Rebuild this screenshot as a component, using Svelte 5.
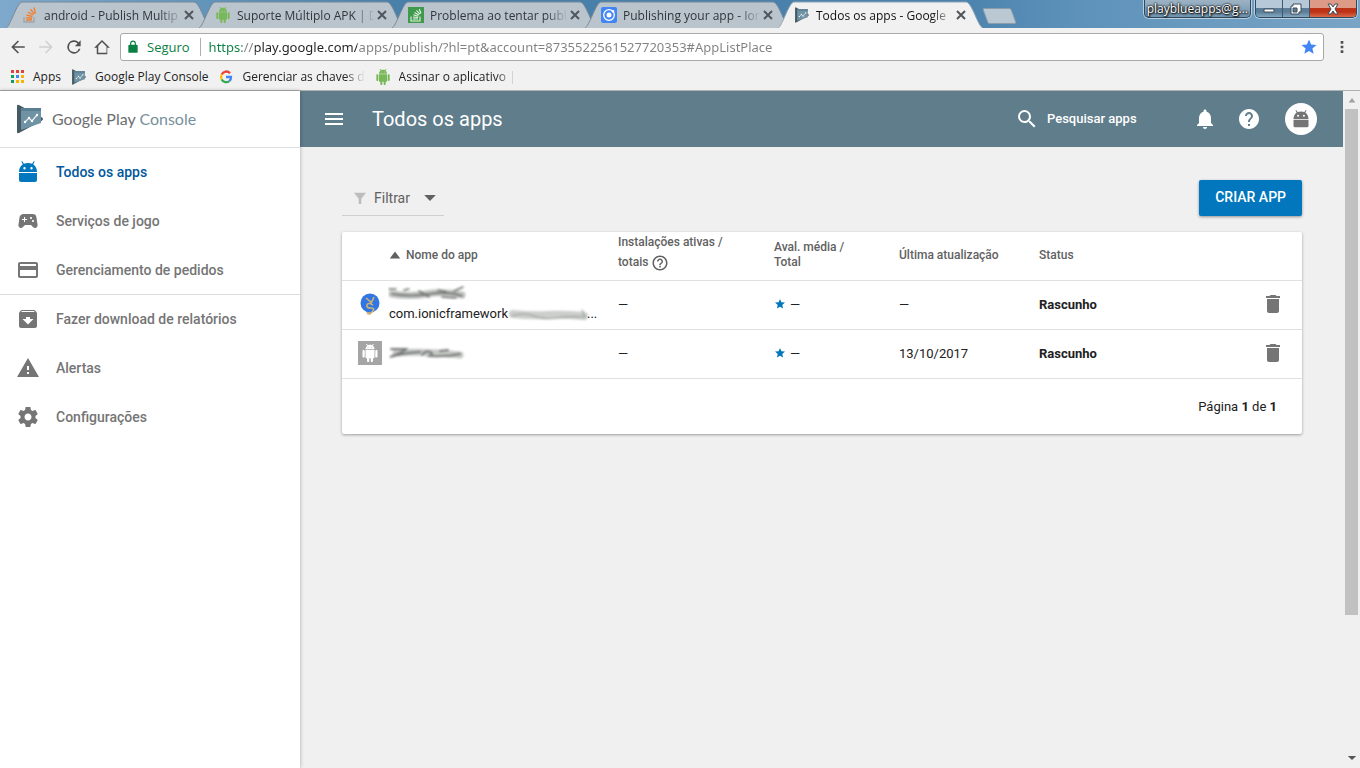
<script>
    const tabs = [
        { title: 'android - Publish Multip', icon: 'stack' },
        { title: 'Suporte Múltiplo APK | D', icon: 'robot' },
        { title: 'Problema ao tentar publ', icon: 'stackpt' },
        { title: 'Publishing your app - Ior', icon: 'ionic' },
        { title: 'Todos os apps - Google', icon: 'play', active: true },
    ];

    const bookmarks = [
        { title: 'Apps', icon: 'grid' },
        { title: 'Google Play Console', icon: 'play' },
        { title: 'Gerenciar as chaves d', icon: 'google', fade: true },
        { title: 'Assinar o aplicativo |', icon: 'robot', fade: true },
    ];

    const menu = [
        { title: 'Todos os apps', icon: 'bot', active: true },
        { title: 'Serviços de jogo', icon: 'gamepad' },
        { title: 'Gerenciamento de pedidos', icon: 'card', last: true },
        { title: 'Fazer download de relatórios', icon: 'archive' },
        { title: 'Alertas', icon: 'warning' },
        { title: 'Configurações', icon: 'gear' },
    ];

    const apps = [
        { icon: 'pin', pkg: 'com.ionicframework', updated: '—', status: 'Rascunho' },
        { icon: 'tile', pkg: '', updated: '13/10/2017', status: 'Rascunho' },
    ];

    // 24x24 single colour icons
    const paths = {
        back: 'M21 11H7l6.3-6.3L11.8 3.300 3 12l8.800 8.700 1.500-1.400L7 13h14z',
        forward: 'M3 11h14l-6.300-6.300 1.500-1.400L21 12l-8.800 8.700-1.500-1.400L17 13H3z',
        reload: 'M17.650 6.350A8 8 0 1 0 19.730 14h-2.080A6 6 0 1 1 12 6c1.660 0 3.140.690 4.220 1.780L13 11h7V4z',
        home: 'M12 2.500 1.500 13H5v8.500h14V13h3.500zM12 5.300l6 6V19.500H7v-8.700z',
        lock: 'M18 8h-1V6A5 5 0 0 0 7 6v2H6a2 2 0 0 0-2 2v10a2 2 0 0 0 2 2h12a2 2 0 0 0 2-2V10a2 2 0 0 0-2-2zM15 8H9V6a3 3 0 0 1 6 0z',
        star: 'M12 17.270 18.180 21l-1.640-7.030L22 9.240l-7.190-.610L12 2 9.190 8.630 2 9.240l5.460 4.730L5.820 21z',
        robot: 'M6 18c0 .55.45 1 1 1h1v3.500c0 .83.67 1.500 1.500 1.500s1.500-.67 1.500-1.500V19h2v3.500c0 .83.67 1.500 1.500 1.500s1.500-.67 1.500-1.500V19h1c.55 0 1-.45 1-1V8H6v10zM3.500 8C2.670 8 2 8.670 2 9.500v7c0 .83.67 1.500 1.500 1.500S5 17.330 5 16.500v-7C5 8.670 4.330 8 3.500 8zm17 0c-.83 0-1.500.67-1.500 1.500v7c0 .83.67 1.500 1.500 1.500s1.500-.67 1.500-1.500v-7c0-.83-.67-1.500-1.500-1.500zm-4.970-5.840l1.300-1.300c.2-.2.2-.51 0-.71-.2-.2-.51-.2-.71 0l-1.480 1.480C13.850 1.230 12.950 1 12 1c-.96 0-1.860.23-2.660.63L7.850.15c-.2-.2-.51-.2-.71 0-.2.2-.2.51 0 .71l1.310 1.310C6.970 3.260 6 5.010 6 7h12c0-1.990-.97-3.750-2.470-4.840zM10 5H9V4h1v1zm5 0h-1V4h1v1z',
        bot: 'M3 13h18v7a2 2 0 0 1-2 2H5a2 2 0 0 1-2-2zM3 12c0-3.400 1.400-6.200 3.800-7.800L5.300 1.800l1-.6 1.600 2.500C9.100 3.200 10.500 3 12 3s2.900.2 4.100.7l1.600-2.500 1 .6-1.500 2.400C19.600 5.800 21 8.600 21 12zM8.500 7a1.200 1.200 0 1 0 0 2.400 1.200 1.200 0 0 0 0-2.400zm7 0a1.200 1.200 0 1 0 0 2.400 1.200 1.200 0 0 0 0-2.400z',
        gamepad: 'M21.580 16.090l-1.090-7.660A3.996 3.996 0 0 0 16.530 5H7.470C5.480 5 3.790 6.460 3.510 8.430l-1.090 7.660C2.200 17.630 3.390 19 4.940 19c.68 0 1.320-.27 1.800-.75L9 16h6l2.250 2.250c.48.48 1.130.75 1.800.75 1.560 0 2.750-1.370 2.530-2.910zM11 11H9v2H8v-2H6v-1h2V8h1v2h2v1zm4-1c-.55 0-1-.45-1-1s.45-1 1-1 1 .45 1 1-.45 1-1 1zm2 3c-.55 0-1-.45-1-1s.45-1 1-1 1 .45 1 1-.45 1-1 1z',
        card: 'M20 4H4c-1.110 0-1.990.89-1.990 2L2 18c0 1.110.89 2 2 2h16c1.110 0 2-.89 2-2V6c0-1.110-.89-2-2-2zm0 14H4v-6h16v6zm0-10H4V6h16v2z',
        archive: 'M20.540 5.230l-1.390-1.680C18.880 3.210 18.470 3 18 3H6c-.47 0-.88.21-1.160.55L3.460 5.230C3.170 5.570 3 6.020 3 6.500V19c0 1.100.9 2 2 2h14c1.100 0 2-.9 2-2V6.500c0-.48-.17-.93-.46-1.270zM12 17.500L6.500 12H10v-2h4v2h3.500L12 17.500zM5.120 5l.81-1h12l.94 1H5.120z',
        warning: 'M1 21h22L12 2 1 21zm12-3h-2v-2h2v2zm0-4h-2v-4h2v4z',
        gear: 'M19.430 12.980c.04-.32.07-.64.07-.98s-.03-.66-.07-.98l2.110-1.650c.19-.15.24-.42.12-.64l-2-3.460c-.12-.22-.39-.3-.61-.22l-2.490 1c-.52-.4-1.080-.73-1.690-.98l-.38-2.650C14.460 2.180 14.250 2 14 2h-4c-.25 0-.46.18-.49.42l-.38 2.650c-.61.25-1.170.59-1.690.98l-2.490-1c-.23-.09-.49 0-.61.22l-2 3.460c-.13.22-.07.49.12.64l2.110 1.650c-.04.32-.07.65-.07.98s.03.66.07.98l-2.110 1.650c-.19.15-.24.42-.12.64l2 3.460c.12.22.39.3.61.22l2.490-1c.52.4 1.080.73 1.690.98l.38 2.650c.03.24.24.42.49.42h4c.25 0 .46-.18.49-.42l.38-2.650c.61-.25 1.170-.59 1.690-.98l2.490 1c.23.09.49 0 .61-.22l2-3.460c.12-.22.07-.49-.12-.64l-2.110-1.650zM12 15.500c-1.930 0-3.500-1.570-3.500-3.500s1.570-3.500 3.500-3.500 3.500 1.570 3.500 3.500-1.570 3.500-3.500 3.500z',
        menu: 'M3 18h18v-2H3v2zm0-5h18v-2H3v2zm0-7v2h18V6H3z',
        search: 'M15.500 14h-.79l-.28-.27A6.471 6.471 0 0 0 16 9.500 6.500 6.500 0 1 0 9.500 16c1.610 0 3.090-.59 4.230-1.570l.27.28v.79l5 4.990L20.490 19l-4.990-5zm-6 0C7.010 14 5 11.990 5 9.500S7.010 5 9.500 5 14 7.010 14 9.500 11.990 14 9.500 14z',
        bell: 'M12 22c1.100 0 2-.9 2-2h-4c0 1.100.89 2 2 2zm6-6v-5c0-3.070-1.640-5.640-4.500-6.320V4c0-.83-.67-1.500-1.500-1.500s-1.500.67-1.500 1.500v.68C7.630 5.360 6 7.920 6 11v5l-2 2v1h16v-1l-2-2z',
        help: 'M12 2C6.480 2 2 6.480 2 12s4.480 10 10 10 10-4.480 10-10S17.520 2 12 2zm1 17h-2v-2h2v2zm2.070-7.750l-.9.920C13.450 12.900 13 13.500 13 15h-2v-.5c0-1.100.45-2.100 1.170-2.830l1.240-1.260c.37-.36.59-.86.59-1.410 0-1.100-.9-2-2-2s-2 .9-2 2H8c0-2.210 1.790-4 4-4s4 1.790 4 4c0 .88-.36 1.680-.93 2.250z',
        helpline: 'M11 18h2v-2h-2v2zm1-16C6.480 2 2 6.480 2 12s4.480 10 10 10 10-4.480 10-10S17.520 2 12 2zm0 18c-4.410 0-8-3.590-8-8s3.590-8 8-8 8 3.590 8 8-3.590 8-8 8zm0-14c-2.210 0-4 1.790-4 4h2c0-1.100.9-2 2-2s2 .9 2 2c0 2-3 1.750-3 5h2c0-2.250 3-2.500 3-5 0-2.210-1.790-4-4-4z',
        filter: 'M3 4h18l-7 9v8h-4v-8z',
        trash: 'M6 19c0 1.100.9 2 2 2h8c1.100 0 2-.9 2-2V7H6v12zM19 4h-3.500l-1-1h-5l-1 1H5v2h14V4z',
        up: 'M4 18 12 7l8 11z',
        sort: 'M3 18 12 6l9 12z',
        down: 'M2 7h20L12 17z',
        dots: 'M10 3h4v4h-4zM10 10h4v4h-4zM10 17h4v4h-4z',
    };
</script>

{#snippet icon(name, size)}
    <svg class="icon" width={size} height={size} viewBox="0 0 24 24" aria-hidden="true">
        <path fill-rule="evenodd" d={paths[name]} />
    </svg>
{/snippet}

{#snippet playLogo(size)}
    <svg class="icon" width={size} height={size} viewBox="0 0 28 30" aria-hidden="true">
        <path fill="#455a64" d="M1 2Q1 0 3 1L26 13.500Q28 15 26 16.500L3 29Q1 30 1 28Z" />
        <path fill="#6f93a5" d="M5 4H25V19L5 26Z" />
        <path fill="#5b7f92" d="M5 4H25V7H5Z" />
        <path fill="none" stroke="#eceff1" stroke-width="1.200" d="M9 18l4-4 3 3 5-6" />
        <g fill="#fff">
            <circle cx="9" cy="18" r="1.200" /><circle cx="13" cy="14" r="1.200" />
            <circle cx="16" cy="17" r="1.200" /><circle cx="21" cy="11" r="1.200" />
        </g>
    </svg>
{/snippet}

{#snippet favicon(name)}
    {#if name === 'play'}
        {@render playLogo(16)}
    {:else if name === 'robot'}
        <span class="green">{@render icon('robot', 16)}</span>
    {:else}
        <svg class="icon" width="16" height="16" viewBox="0 0 16 16" aria-hidden="true">
            {#if name === 'stack'}
                <path fill="none" stroke="#a1a5a9" stroke-width="1.300" d="M2 10v5h10v-5" />
                <path fill="none" stroke="#ef8236" stroke-width="1.400" d="M4 13h6M4 10.700l6 .6M4.500 8l6 1.500M6 5l5.300 3M8.500 2.300l3.800 4.800M12 .5l1.300 6" />
            {:else if name === 'stackpt'}
                <rect width="16" height="16" fill="#3f9b4b" />
                <path fill="none" stroke="#e5f3e6" stroke-width="1.100" d="M3 9.500V14h9V9.500M5 12h5M5 10l5 .5M5.300 7.800l5 1.500M6.500 5.500l4.500 2.600M8.500 3.300l3.500 3.800M11.300 2l1.700 4.500" />
            {:else if name === 'ionic'}
                <rect width="16" height="16" rx="2" fill="#4286f4" />
                <circle cx="8" cy="8" r="5.300" fill="none" stroke="#fff" stroke-width="1.300" />
                <circle cx="8" cy="8" r="2.500" fill="#fff" />
                <circle cx="12" cy="4.200" r="1.300" fill="#fff" />
            {:else if name === 'grid'}
                <path fill="#db4437" d="M2 1h3v3H2zM7 1h3v3H7zM12 1h3v3h-3z" />
                <path fill="#0f9d58" d="M2 6h3v3H2zM2 11h3v3H2z" />
                <path fill="#4285f4" d="M7 6h3v3H7z" />
                <path fill="#f4b400" d="M12 6h3v3h-3zM7 11h3v3H7zM12 11h3v3h-3z" />
            {:else if name === 'google'}
                <g fill="none" stroke-width="2.300">
                    <path stroke="#ea4335" d="M12 4.200A5 5 0 0 0 3.700 5.500" />
                    <path stroke="#fbbc05" d="M3.700 5.500a5 5 0 0 0 0 5" />
                    <path stroke="#34a853" d="M3.700 10.500a5 5 0 0 0 7.700 1.500" />
                    <path stroke="#4285f4" d="M11.400 12A5 5 0 0 0 13 8H8" />
                </g>
            {/if}
        </svg>
    {/if}
{/snippet}

{#snippet smudge(kind)}
    <svg class="smudge" width="82" height="16" viewBox="0 0 82 16" aria-hidden="true">
        <g class="soft" fill="none" stroke-linecap="round">
            {#if kind === 'name'}
                <path stroke="#c0c3c0" stroke-width="7" d="M4 10q18 3 34 0t36 1" />
                <path stroke="#6d706e" stroke-width="1.500" d="M1 5h7M16 6l5-1M4 10q20 3 38 0t32 2M31 7l10 6M50 6l8 2M66 7l9-4M54 13l14 1" />
            {:else if kind === 'pkg'}
                <path stroke="#cbcecb" stroke-width="8" d="M5 8q18 2 34 1t37 1" />
                <path stroke="#9a9e9b" stroke-width="1.200" d="M4 10q12-4 22 0t22 2 28-1M74 4l3 7" />
            {:else}
                <path stroke="#c6c8c6" stroke-width="7" d="M8 8q30-2 64 2" />
                <path stroke="#777a78" stroke-width="2" d="M3 4h15q-4 4-16 8 12-4 30-5M34 10q4-5 8-3t0 4q16 1 30-2M52 6l8-1" />
            {/if}
        </g>
    </svg>
{/snippet}

<div class="window">
    <header class="browser">
        <div class="tabstrip">
            {#each tabs as tab}
                <div class="tab" class:active={tab.active}>
                    <svg class="tab-shape" viewBox="0 0 205 27" preserveAspectRatio="none" aria-hidden="true">
                        <path d="M0 27C4 26 11 1 16 1H188C194 1 200 26 205 27" />
                    </svg>
                    {@render favicon(tab.icon)}
                    <span class="tab-title">{tab.title}</span>
                    <button class="tab-close" aria-label="Fechar guia">
                        <svg width="10" height="10" viewBox="0 0 10 10"><path d="M1 1l8 8M9 1l-8 8" /></svg>
                    </button>
                </div>
            {/each}
            <button class="new-tab" aria-label="Nova guia"></button>
            <div class="caption">
                <button class="profile">playblueapps@g...</button>
                <div class="controls">
                    <button aria-label="Minimizar">
                        <svg width="12" height="12" viewBox="0 0 12 12"><path class="glyph" d="M1 6h10v3H1z" /></svg>
                    </button>
                    <button aria-label="Restaurar">
                        <svg width="12" height="12" viewBox="0 0 12 12">
                            <path class="glyph" fill-rule="evenodd" d="M3 1h8v8h-2v2H1V3h2zM3 5v4h4V5z" />
                        </svg>
                    </button>
                    <button class="close" aria-label="Fechar">
                        <svg width="14" height="12" viewBox="0 0 14 12">
                            <path class="glyph" d="M2 1h3l2 3 2-3h3L9 6l3 5H9L7 8l-2 3H2l3-5z" />
                        </svg>
                    </button>
                </div>
            </div>
        </div>

        <div class="toolbar">
            <button class="tool" aria-label="Voltar">{@render icon('back', 18)}</button>
            <button class="tool disabled" aria-label="Avançar">{@render icon('forward', 18)}</button>
            <button class="tool" aria-label="Recarregar">{@render icon('reload', 20)}</button>
            <button class="tool" aria-label="Página inicial">{@render icon('home', 18)}</button>
            <div class="omnibox">
                {@render icon('lock', 14)}
                <label for="url">Seguro</label>
                <input id="url" type="text" value="https://play.google.com/apps/publish/?hl=pt&account=8735522561527720353#AppListPlace">
                <button class="favorite" aria-label="Favorito">{@render icon('star', 18)}</button>
            </div>
            <button class="tool dots" aria-label="Menu">{@render icon('dots', 16)}</button>
        </div>

        <nav class="bookmarks">
            {#each bookmarks as mark}
                <a href="#bookmark">
                    {@render favicon(mark.icon)}
                    <span class:fade={mark.fade}>{mark.title}</span>
                </a>
            {/each}
        </nav>
    </header>

    <div class="page">
        <aside>
            <a class="brand" href="#home">
                {@render playLogo(30)}
                <span>Google Play <em>Console</em></span>
            </a>
            <nav>
                {#each menu as item}
                    <a href="#menu" class:active={item.active} class:last={item.last}>
                        {@render icon(item.icon, 24)}
                        {item.title}
                    </a>
                {/each}
            </nav>
        </aside>

        <main>
            <div class="topbar">
                <button aria-label="Menu principal">{@render icon('menu', 24)}</button>
                <h1>Todos os apps</h1>
                <label class="search">
                    {@render icon('search', 24)}
                    <input type="text" placeholder="Pesquisar apps">
                </label>
                <button class="notifications" aria-label="Notificações">{@render icon('bell', 24)}</button>
                <button class="help" aria-label="Ajuda">{@render icon('help', 24)}</button>
                <button class="avatar" aria-label="Conta">{@render icon('bot', 20)}</button>
            </div>

            <div class="content">
                <div class="actions">
                    <button class="filter">
                        {@render icon('filter', 16)}
                        <span>Filtrar</span>
                        {@render icon('down', 14)}
                    </button>
                    <button class="create">CRIAR APP</button>
                </div>

                <section class="card">
                    <table>
                        <colgroup>
                            <col>
                            <col class="installs">
                            <col class="rating">
                            <col class="updated">
                            <col class="status">
                            <col class="remove">
                        </colgroup>
                        <thead>
                            <tr>
                                <th class="sorted">{@render icon('sort', 14)}Nome do app</th>
                                <th class="tall">Instalações ativas /<br>totais {@render icon('helpline', 18)}</th>
                                <th>Aval. média /<br>Total</th>
                                <th>Última atualização</th>
                                <th>Status</th>
                                <th></th>
                            </tr>
                        </thead>
                        <tbody>
                            {#each apps as app}
                                <tr>
                                    <td>
                                        <div class="app">
                                            {#if app.icon === 'pin'}
                                                <svg width="24" height="24" viewBox="0 0 24 24" aria-hidden="true">
                                                    <path fill="#e8b64c" d="M8 18h8l-4 5z" />
                                                    <circle cx="12" cy="11" r="9.500" fill="#3276e3" />
                                                    <path fill="none" stroke="#cdb277" stroke-width="1.600" d="M8 6l6 5M16 5q-1 4-4 6M15 13q-5-3-6 0t4 3 1 4-5 0" />
                                                </svg>
                                            {:else}
                                                <span class="tile">{@render icon('robot', 18)}</span>
                                            {/if}
                                            <div class="app-name">
                                                {@render smudge(app.pkg ? 'name' : 'short')}
                                                {#if app.pkg}
                                                    <span class="package">{app.pkg}{@render smudge('pkg')}...</span>
                                                {/if}
                                            </div>
                                        </div>
                                    </td>
                                    <td>—</td>
                                    <td><span class="score">{@render icon('star', 12)}—</span></td>
                                    <td>{app.updated}</td>
                                    <td><b>{app.status}</b></td>
                                    <td><button class="trash" aria-label="Excluir">{@render icon('trash', 24)}</button></td>
                                </tr>
                            {/each}
                        </tbody>
                    </table>
                    <p class="pager">Página <b>1</b> de <b>1</b></p>
                </section>
            </div>
        </main>

        <div class="scrollbar">
            {@render icon('up', 10)}
            <div class="track">
                <div class="thumb"></div>
            </div>
            {@render icon('down', 10)}
        </div>
    </div>
</div>

<style>
:global(body) {
    margin: 0;
}

.window {
    display: flex;
    flex-direction: column;
    height: 100vh;
    overflow: hidden;
    font-family: Roboto, sans-serif;
    font-size: 13px;
    color: #212121;
}

button, input {
    font: inherit;
    color: inherit;
    background: none;
    border: 0;
    padding: 0;
}

input {
    outline: 0;
}

a {
    color: inherit;
    text-decoration: none;
}

.icon {
    display: block;
    flex: none;
    fill: currentColor;
}

/* Browser */
.browser {
    font-family: "Open Sans", "Noto Sans", sans-serif;
    font-size: 12px;
    background: #f1f1f1;
    border-bottom: 1px solid #b0b0b0;
}

.tabstrip {
    display: flex;
    height: 28px;
    padding-left: 6px;
    background: linear-gradient(90deg, #7fa9cc 0%, #487fa8 30%, #4a82ad 70%, #5f93bb 80%, #79a4c5 100%);
}

.tab {
    position: relative;
    display: flex;
    align-items: center;
    flex: 0 1 205px;
    min-width: 0;
    box-sizing: border-box;
    margin-right: -12px;
    padding: 2px 17px 0 16px;
    color: #30363b;
}

.tab.active {
    z-index: 1;
    color: #111;
}

.tab .icon, .tab-title, .tab-close, .tab .green {
    position: relative;
}

.tab-shape {
    position: absolute;
    inset: 1px 0 0;
    width: 100%;
    height: 27px;
    fill: #bac4cd;
    stroke: #74889a;
}

.active .tab-shape {
    fill: #f1f1f1;
    stroke: #8fa3b3;
}

.tab-title {
    flex: 1;
    min-width: 0;
    margin-left: 6px;
    white-space: nowrap;
    mask-image: linear-gradient(90deg, #000 116px, transparent 138px);
}

.tab-close {
    display: flex;
    margin-left: 2px;
}

.tab-close path {
    stroke: #50565b;
    stroke-width: 2;
}

.green {
    color: #78b957;
}

.new-tab {
    flex: none;
    width: 29px;
    height: 16px;
    margin: 8px 0 0 14px;
    background: #bac8d3;
    border: 1px solid #8a9dac;
    border-radius: 2px;
    transform: skewX(20deg);
}

.caption {
    display: flex;
    flex: none;
    align-items: flex-start;
    margin-left: auto;
    padding-right: 3px;
}

.profile {
    height: 18px;
    margin-right: 4px;
    padding: 0 2px;
    line-height: 17px;
    color: #fff;
    text-shadow: 0 0 2px #000, 0 0 2px #000, 1px 1px 2px #000;
    background: linear-gradient(#9db3c4, #6f93ae);
    border: 1px solid #31495c;
    border-top: 0;
    border-radius: 0 0 5px 5px;
    box-shadow: 0 0 0 1px #b7cfe0;
}

.controls {
    display: flex;
    border: 1px solid #31495c;
    border-top: 0;
    border-radius: 0 0 5px 5px;
    box-shadow: 0 0 0 1px #b7cfe0;
    overflow: hidden;
}

.controls button {
    display: flex;
    align-items: center;
    justify-content: center;
    width: 27px;
    height: 17px;
    background: linear-gradient(#b5c9d8 0 50%, #5c7d97 50% 70%, #85a9c3);
    border-right: 1px solid #3f596c;
}

.controls .close {
    width: 46px;
    border: 0;
    background: linear-gradient(#dd9a87 0 50%, #bd3217 50% 70%, #d96a49);
}

.glyph {
    fill: #fff;
    stroke: #3d4c58;
}

.toolbar {
    display: flex;
    align-items: center;
    height: 38px;
    padding: 0 8px 0 4px;
    color: #505050;
}

.tool {
    display: flex;
    justify-content: center;
    width: 28px;
}

.disabled {
    color: #d0d0d0;
}

.omnibox {
    display: flex;
    flex: 1;
    align-items: center;
    height: 28px;
    box-sizing: border-box;
    margin: 0 8px 0 4px;
    padding: 0 5px;
    color: #0b8043;
    background: #fff;
    border: 1px solid #a9a9a9;
    border-radius: 3px;
    font-size: 13px;
}

.omnibox label {
    margin: 0 8px 0 7px;
    padding-right: 10px;
    line-height: 18px;
    border-right: 1px solid #b0b0b0;
}

.omnibox input {
    flex: 1;
    min-width: 0;
    font-family: "Noto Sans", "Open Sans", sans-serif;
    /* Scheme in green, host in black, the rest in grey */
    background: linear-gradient(90deg, #0b8043 0 33px, #808080 33px 46px, #222 46px 148px, #808080 148px);
    background-clip: text;
    -webkit-text-fill-color: transparent;
}

.favorite {
    color: #4285f4;
}

.dots {
    width: 20px;
}

.bookmarks {
    display: flex;
    height: 24px;
    box-sizing: border-box;
    align-items: center;
    padding: 0 0 3px 9px;
    gap: 10px;
    color: #222;
    white-space: nowrap;
}

.bookmarks a {
    display: flex;
    align-items: center;
    gap: 8px;
}

.fade {
    mask-image: linear-gradient(270deg, transparent, #000 20px);
}

/* Page */
.page {
    display: flex;
    flex: 1;
    min-height: 0;
    background: #f0f0f0;
}

aside {
    width: 300px;
    flex: none;
    background: #fff;
    box-shadow: 0 0 4px rgba(0, 0, 0, .3);
    z-index: 1;
}

.brand {
    display: flex;
    align-items: center;
    gap: 7px;
    height: 56px;
    box-sizing: content-box;
    padding-left: 15px;
    border-bottom: 1px solid #dde1e3;
    font-family: Lato, sans-serif;
    font-size: 16px;
    color: #6d6e70;
}

.brand span {
    padding-bottom: 2px;
}

.brand em {
    font-style: normal;
    color: #78909c;
}

aside nav a {
    display: flex;
    align-items: center;
    gap: 16px;
    height: 49px;
    box-sizing: border-box;
    padding: 0 0 2px 16px;
    font-size: 14px;
    font-weight: 500;
    color: #757575;
}

aside nav .active {
    color: #01579b;
}

aside nav .active .icon {
    color: #0277bd;
}

aside nav .last {
    padding-bottom: 1px;
    border-bottom: 1px solid #dcdcdc;
}

main {
    flex: 1;
    min-width: 0;
}

.topbar {
    display: flex;
    align-items: center;
    height: 56px;
    padding: 0 26px 0 22px;
    color: #fff;
    background: #607d8b;
}

h1 {
    margin: 0 auto 0 26px;
    font-size: 20px;
    font-weight: 400;
}

.search {
    display: flex;
    align-items: center;
    gap: 8px;
}

.search input {
    width: 146px;
    padding-bottom: 2px;
    font-weight: 500;
}

.search input::placeholder {
    color: #fff;
}

.help {
    margin: 0 24px 0 20px;
}

.avatar {
    display: flex;
    align-items: center;
    justify-content: center;
    width: 32px;
    height: 32px;
    border-radius: 50%;
    color: #757575;
    background: #fff;
}

.content {
    padding: 33px 41px 0 42px;
}

.actions {
    display: flex;
    justify-content: space-between;
    margin-bottom: 16px;
}

.filter {
    display: flex;
    align-items: center;
    height: 36px;
    padding: 0 7px 0 10px;
    border-bottom: 1px solid #d0d0d0;
    font-size: 14px;
    color: #616161;
}

.filter span {
    margin: 0 13px 0 6px;
}

.filter .icon:first-child {
    color: #bdbdbd;
}

.create {
    height: 36px;
    padding: 0 16px 2px;
    font-size: 14px;
    font-weight: 500;
    color: #fff;
    background: #0277bd;
    border-radius: 2px;
    box-shadow: 0 1px 3px rgba(0, 0, 0, .4);
}

.card {
    background: #fff;
    border-radius: 2px;
    box-shadow: 0 1px 3px rgba(0, 0, 0, .35);
}

table {
    width: 100%;
    table-layout: fixed;
    border-collapse: collapse;
}

.installs {
    width: 156px;
}

.rating {
    width: 125px;
}

.updated {
    width: 140px;
}

.status {
    width: 222px;
}

.remove {
    width: 41px;
}

th, td {
    height: 46px;
    padding: 0 0 2px;
    text-align: left;
    border-bottom: 1px solid #e0e0e0;
}

th {
    font-size: 12px;
    font-weight: 500;
    line-height: 15px;
    color: #616161;
}

th .icon {
    display: inline-block;
    vertical-align: middle;
}

.tall {
    height: 40px;
    padding-bottom: 8px;
    line-height: 20px;
}

.sorted {
    padding-left: 46px;
}

.sorted .icon {
    margin-right: 4px;
}

.app {
    display: flex;
    align-items: center;
    gap: 6px;
    padding-left: 16px;
}

.tile {
    display: flex;
    align-items: center;
    justify-content: center;
    width: 24px;
    height: 24px;
    color: #fff;
    background: #a5a5a5;
}

.app-name {
    display: flex;
    flex-direction: column;
    gap: 4px;
}

.package {
    display: flex;
    align-items: center;
    line-height: 20px;
    padding-left: 1px;
}

.package .smudge {
    margin-right: -3px;
}

.soft {
    filter: blur(1px);
}

.score {
    display: flex;
    align-items: center;
    gap: 4px;
}

.score .icon {
    color: #0277bd;
}

.trash {
    display: block;
    color: #757575;
}

.pager {
    margin: 0;
    padding-right: 25px;
    line-height: 55px;
    text-align: right;
}

b {
    font-weight: 700;
}

.scrollbar {
    display: flex;
    flex-direction: column;
    align-items: center;
    gap: 4px;
    width: 17px;
    padding: 4px 0 5px;
    box-sizing: border-box;
    color: #555;
}

.scrollbar .icon:first-child {
    color: #a0a0a0;
}

.track {
    flex: 1;
    width: 13px;
}

.thumb {
    height: 79%;
    background: #c1c1c1;
}
</style>
